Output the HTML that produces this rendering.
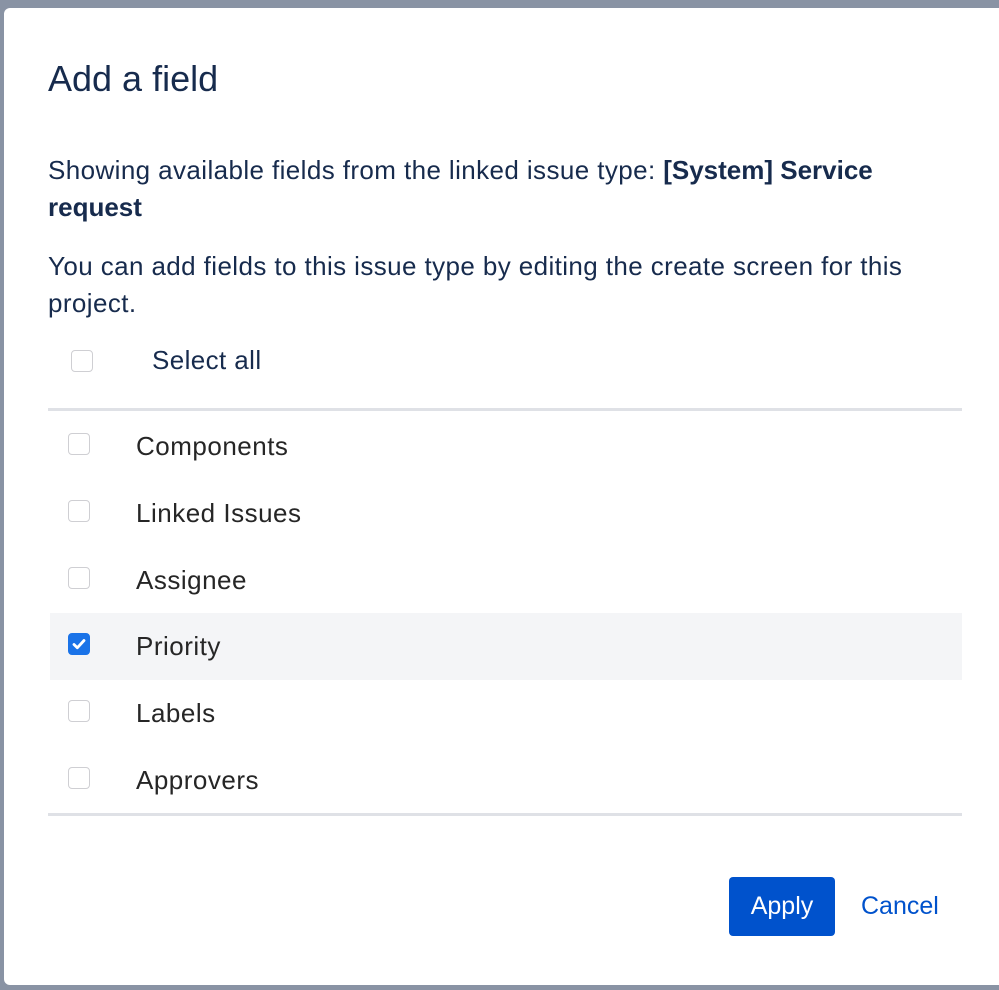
<!DOCTYPE html>
<html><head><style>
body{margin:0;width:999px;height:990px;background:#8993a4;position:relative;overflow:hidden;font-family:"Liberation Sans",sans-serif;}
.modal{position:absolute;left:4px;top:8px;width:1010px;height:977px;background:#fff;border-radius:6px;}
.a{position:absolute;color:#172b4d;}
.cb{position:absolute;width:22px;height:22px;border:1px solid #cfcfd3;border-radius:4px;background:#fff;box-sizing:border-box;}
.row{position:absolute;left:136px;font-size:26px;color:#262626;letter-spacing:0.5px;}
.line{position:absolute;left:48px;width:914px;height:3px;background:#dfe1e6;}
</style></head><body>
<div class="modal"></div>
<div class="a" style="left:48px;top:58px;font-size:36px;">Add a field</div>
<div class="a" style="left:48px;top:152px;font-size:26px;line-height:37px;width:890px;letter-spacing:0.4px;">Showing available fields from the linked issue type: <b style="letter-spacing:0px">[System] Service request</b></div>
<div class="a" style="left:48px;top:248px;font-size:26px;line-height:37px;width:890px;letter-spacing:0.4px;">You can add fields to this issue type by editing the create screen for this project.</div>
<div class="cb" style="left:71px;top:350px;"></div>
<div class="a" style="left:152px;top:345px;font-size:26px;letter-spacing:0.4px;">Select all</div>
<div class="line" style="top:408px;"></div>
<div style="position:absolute;left:50px;top:613px;width:912px;height:67px;background:#f4f5f7;"></div>
<div class="cb" style="left:68px;top:433px;"></div><div class="row" style="top:431px;">Components</div>
<div class="cb" style="left:68px;top:500px;"></div><div class="row" style="top:498px;">Linked Issues</div>
<div class="cb" style="left:68px;top:567px;"></div><div class="row" style="top:565px;">Assignee</div>
<div class="cb" style="left:68px;top:633px;background:#1a73e8;border-color:#1a73e8;"><svg width="22" height="22" viewBox="0 0 22 22" style="position:absolute;left:-1px;top:-1px"><path d="M6 11.5l3.3 3.3L16 7.5" stroke="#fff" stroke-width="2.8" fill="none" stroke-linecap="round" stroke-linejoin="round"/></svg></div><div class="row" style="top:631px;">Priority</div>
<div class="cb" style="left:68px;top:700px;"></div><div class="row" style="top:698px;">Labels</div>
<div class="cb" style="left:68px;top:767px;"></div><div class="row" style="top:765px;">Approvers</div>
<div class="line" style="top:813px;"></div>
<div style="position:absolute;left:729px;top:877px;width:106px;height:59px;background:#0052cc;border-radius:4px;color:#fff;font-size:25px;line-height:59px;text-align:center;">Apply</div>
<div style="position:absolute;left:861px;top:877px;line-height:59px;font-size:25px;color:#0052cc;">Cancel</div>
</body></html>
